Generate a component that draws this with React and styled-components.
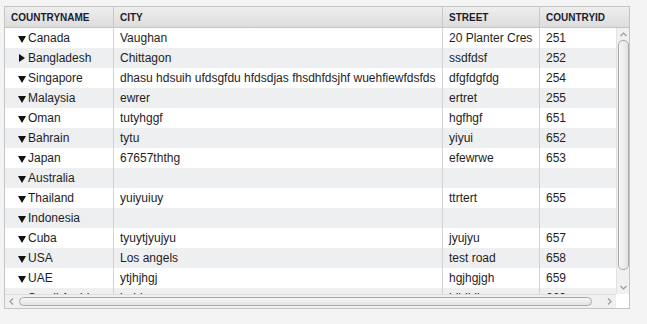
import React from "react";
import styled, { createGlobalStyle, css } from "styled-components";

const GlobalStyle = createGlobalStyle`
	html, body {
		margin: 0;
		padding: 0;
		background: #f4f4f4;
	}
	body {
		font-family: "Liberation Sans", Arial, sans-serif;
	}
`;

const Page = styled.div`
	padding: 6px 0 0 4px;
`;

const Grid = styled.div`
	width: 626px;
	height: 303px;
	box-sizing: border-box;
	border: 1px solid #c4c4c4;
	background: #fff;
	display: grid;
	grid-template-columns: 611px 13px;
	grid-template-rows: 21px 266px 14px;
`;

const Header = styled.div`
	grid-column: 1 / 3;
	display: grid;
	grid-template-columns: 109px 329px 97px 1fr;
	background: linear-gradient(#eeeeee, #dddddd);
	border-bottom: 1px solid #c4c4c4;
`;

const HeadCell = styled.div`
	display: flex;
	align-items: center;
	padding: 0 6px;
	font-size: 10px;
	font-weight: bold;
	color: #1c1c30;
	border-right: 1px solid #c8c8c8;
	${props => props.last && css`
		border-right: none;
	`}
`;

const Body = styled.div`
	overflow: hidden;
`;

const Row = styled.div`
	display: grid;
	grid-template-columns: 109px 329px 97px 76px;
	height: 20px;
	background: ${props => (props.odd ? "#eeeff1" : "#ffffff")};
`;

const Cell = styled.div`
	display: flex;
	align-items: center;
	padding: 0 6px;
	font-size: 12px;
	color: #1e1e1e;
	white-space: nowrap;
	overflow: hidden;
	border-right: 1px solid #d2d2d2;
	${props => props.last && css`
		border-right: none;
	`}
`;

const TreeCell = styled(Cell)`
	padding-left: 13px;
	gap: 2px;
`;

const Toggle = styled.span`
	width: 0;
	height: 0;
	flex: none;
	${props => props.open ? css`
		border-left: 4px solid transparent;
		border-right: 4px solid transparent;
		border-top: 7px solid #111;
		margin-top: 2px;
	` : css`
		border-top: 4px solid transparent;
		border-bottom: 4px solid transparent;
		border-left: 6px solid #111;
		margin: 0 1px 0 1px;
	`}
`;

const VScroll = styled.div`
	background: #f0f0f0;
	border-left: 1px solid #e2e2e2;
	display: flex;
	flex-direction: column;
	align-items: center;
	padding: 2px 0;
	box-sizing: border-box;
`;

const HScroll = styled.div`
	background: #f0f0f0;
	border-top: 1px solid #dcdcdc;
	display: flex;
	align-items: center;
	padding: 0 2px;
`;

const Corner = styled.div`
	background: #fff;
`;

const Arrow = styled.svg`
	flex: none;
	width: 9px;
	height: 9px;
`;

const VThumb = styled.div`
	width: 9px;
	height: 228px;
	margin: 1px 0 auto;
	border: 1px solid #a9a9a9;
	border-radius: 5px;
	background: linear-gradient(90deg, #f6f6f6, #e4e4e4);
`;

const HThumb = styled.div`
	height: 7px;
	width: 571px;
	margin: 0 auto 0 3px;
	border: 1px solid #a9a9a9;
	border-radius: 5px;
	background: linear-gradient(#f6f6f6, #e4e4e4);
`;

const Chevron = ({ dir }) => {
	const paths = {
		up: "M1.5 6 L4.5 3 L7.5 6",
		down: "M1.5 3 L4.5 6 L7.5 3",
		left: "M6 1.5 L3 4.5 L6 7.5",
		right: "M3 1.5 L6 4.5 L3 7.5",
	};
	return (
		<Arrow viewBox="0 0 9 9">
			<path d={paths[dir]} fill="none" stroke="#9a9a9a" strokeWidth="1.2" />
		</Arrow>
	);
};

const rows = [
	["Canada", "Vaughan", "20 Planter Cres", "251", true],
	["Bangladesh", "Chittagon", "ssdfdsf", "252", false],
	["Singapore", "dhasu hdsuih ufdsgfdu hfdsdjas fhsdhfdsjhf wuehfiewfdsfds", "dfgfdgfdg", "254", true],
	["Malaysia", "ewrer", "ertret", "255", true],
	["Oman", "tutyhggf", "hgfhgf", "651", true],
	["Bahrain", "tytu", "yiyui", "652", true],
	["Japan", "67657ththg", "efewrwe", "653", true],
	["Australia", "", "", "", true],
	["Thailand", "yuiyuiuy", "ttrtert", "655", true],
	["Indonesia", "", "", "", true],
	["Cuba", "tyuytjyujyu", "jyujyu", "657", true],
	["USA", "Los angels", "test road", "658", true],
	["UAE", "ytjhjhgj", "hgjhgjgh", "659", true],
	["Saudi Arabia", "bnbbn", "hjhjhjh", "660", true],
];

const App = () => {
	return (
		<Page>
			<GlobalStyle />
			<Grid>
				<Header>
					<HeadCell>COUNTRYNAME</HeadCell>
					<HeadCell>CITY</HeadCell>
					<HeadCell>STREET</HeadCell>
					<HeadCell last>COUNTRYID</HeadCell>
				</Header>
				<Body>
					{rows.map(([country, city, street, id, open], index) => (
						<Row key={index} odd={index % 2 === 1}>
							<TreeCell>
								<Toggle open={open} />
								{country}
							</TreeCell>
							<Cell>{city}</Cell>
							<Cell>{street}</Cell>
							<Cell last>{id}</Cell>
						</Row>
					))}
				</Body>
				<VScroll>
					<Chevron dir="up" />
					<VThumb />
					<Chevron dir="down" />
				</VScroll>
				<HScroll>
					<Chevron dir="left" />
					<HThumb />
					<Chevron dir="right" />
				</HScroll>
				<Corner />
			</Grid>
		</Page>
	);
};

export default App;
